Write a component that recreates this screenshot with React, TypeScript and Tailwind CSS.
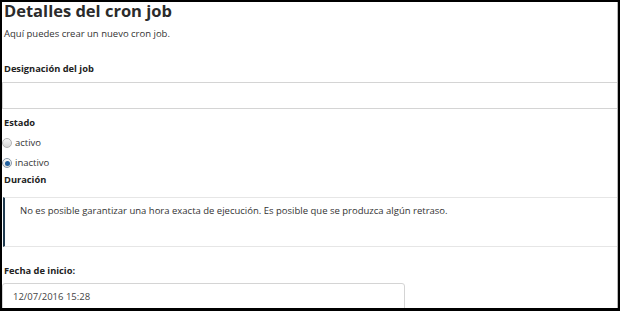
import React from 'react';

const font = { fontFamily: '"Open Sans", "DejaVu Sans", sans-serif' };

export default function App() {
  return (
    <div className="w-[620px] h-[311px] bg-black overflow-hidden" style={font}>
      <div className="ml-[2px] mt-[2px] w-[616px] h-[306px] bg-white border-r border-[#b8b8b8] overflow-hidden text-[#333]">
        <h1 className="pl-[2px] text-[16.5px] leading-[17px] font-bold text-[#2b2b2b]">Detalles del cron job</h1>
        <p className="mt-[8px] pl-[2px] text-[9.5px] leading-[14px]">Aquí puedes crear un nuevo cron job.</p>

        <div className="mt-[21px] pl-[2px] text-[9.3px] font-bold leading-[14px] text-[#222]">Designación del job</div>
        <div className="mt-[6px] h-[27px] border border-[#d4d4d4] border-r-0" />

        <div className="mt-[7px] pl-[2px] text-[9.3px] font-bold leading-[14px] text-[#222]">Estado</div>
        <label className="mt-[6px] h-[14px] flex items-center gap-[3px] text-[9.5px] leading-[14px]">
          <span className="w-[10px] h-[10px] rounded-full border border-[#b4b4b4] bg-gradient-to-b from-[#f6f6f6] to-[#d6d6d6]" />
          activo
        </label>
        <label className="mt-[6px] h-[14px] flex items-center gap-[3px] text-[9.5px] leading-[14px]">
          <span className="w-[10px] h-[10px] rounded-full border border-[#8a9aaa] bg-gradient-to-b from-[#fafafa] to-[#dcdcdc] flex items-center justify-center">
            <span className="w-[5px] h-[5px] rounded-full bg-[#1f5f9f]" />
          </span>
          inactivo
        </label>
        <div className="mt-[3px] pl-[2px] text-[9.3px] font-bold leading-[14px] text-[#222]">Duración</div>

        <div className="mt-[10px] h-[50px] border-t border-b border-[#e6e6e6] border-l-[2px] border-l-[#1f3a4e] ml-px pl-[15px] pt-[6px] text-[9.5px] leading-[14px]">
          No es posible garantizar una hora exacta de ejecución. Es posible que se produzca algún retraso.
        </div>

        <div className="mt-[17px] pl-[2px] text-[9.3px] font-bold leading-[14px] text-[#222]">Fecha de inicio:</div>
        <div className="mt-[5px] w-[403px] h-[30px] border border-[#d4d4d4] rounded-[3px] pl-[10px] pt-[6px] text-[9.5px] leading-[14px] text-[#444]">
          12/07/2016 15:28
        </div>
      </div>
    </div>
  );
}
